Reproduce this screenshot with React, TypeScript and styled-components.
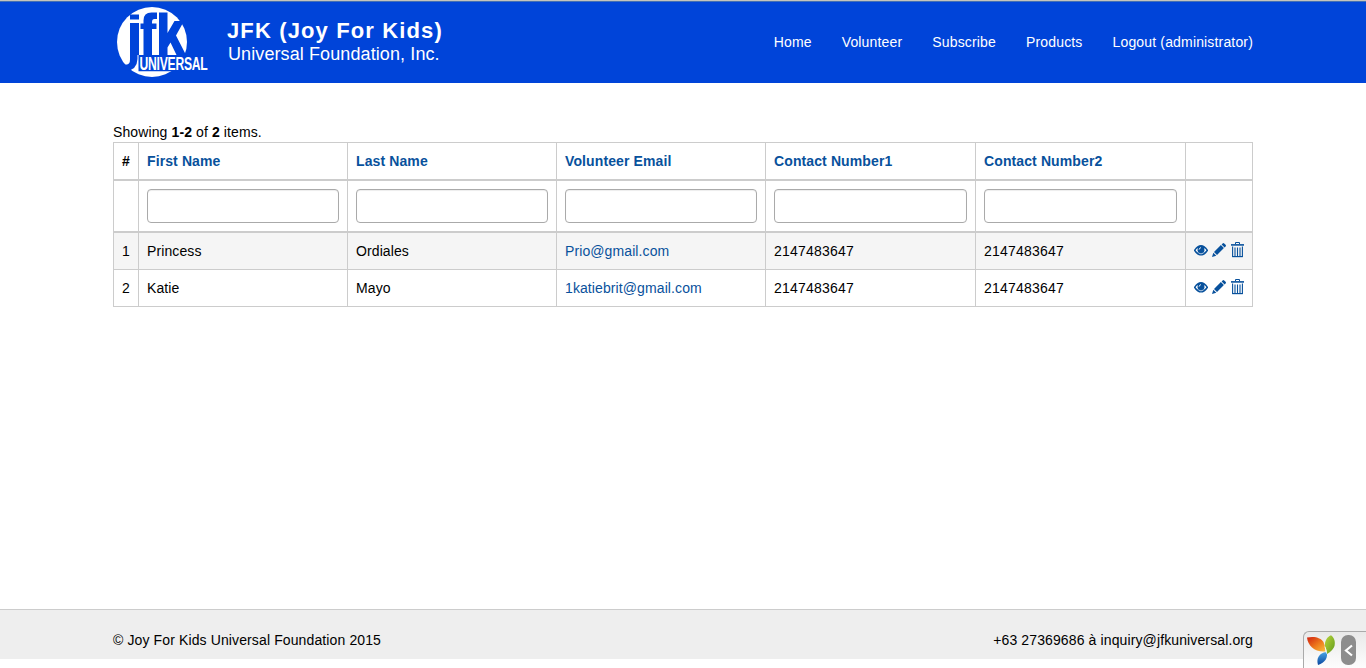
import React from "react";
import styled, { createGlobalStyle } from "styled-components";

const Global = createGlobalStyle`
  * { box-sizing: border-box; }
  body {
    margin: 0;
    background: #fff;
    color: #000;
    font: 14px/20px "Liberation Sans", Arial, sans-serif;
    letter-spacing: 0.11px;
  }
`;

const Page = styled.div`
  height: 668px;
  display: flex;
  flex-direction: column;
  overflow: hidden;
`;

const Container = styled.div`
  width: 1140px;
  margin: 0 auto;
  display: flex;
  justify-content: space-between;
`;

const Header = styled.header`
  height: 83px;
  background: #0044d9;
  border-top: 1px solid #c4c4bc;
  box-shadow: inset 0 1px 0 #4470b4;
`;

const Brand = styled.div`
  display: flex;
  padding: 5px 0 0 3px;
`;

const BrandText = styled.div`
  margin: 13px 0 0 15px;
  color: #fff;
`;

const BrandTitle = styled.div`
  font-size: 22px;
  font-weight: bold;
  line-height: 23px;
  letter-spacing: 1.13px;
  white-space: nowrap;
`;

const BrandSubtitle = styled.div`
  padding: 1px 0 0 1px;
  font-size: 18px;
  line-height: 22px;
  letter-spacing: 0.1px;
  white-space: nowrap;
`;

const Nav = styled.nav`
  display: flex;
  gap: 30px;
  padding-top: 31px;
  letter-spacing: 0.16px;
`;

const NavLink = styled.a`
  color: #fff;
`;

const Main = styled.main`
  flex: 1;
  width: 1140px;
  margin: 0 auto;
  padding-top: 39px;
`;

const Table = styled.table`
  width: 1139px;
  table-layout: fixed;
  border-collapse: collapse;
  border: 1px solid #ccc;
`;

const Col = styled.col<{ $w: number }>`
  width: ${(p) => p.$w}px;
`;

const HeadCell = styled.th`
  padding: 8px;
  height: 37px;
  text-align: left;
  white-space: nowrap;
  border: 1px solid #ccc;
  border-bottom-width: 2px;
  color: #000;
`;

const SortLink = styled.a`
  color: #08519c;
`;

const FilterCell = styled.td`
  padding: 8px;
  border: 1px solid #ccc;
  border-bottom-width: 2px;
`;

const FilterInput = styled.input`
  display: block;
  width: 100%;
  height: 34px;
  border: 1px solid #aaa;
  border-radius: 4px;
  background: #fff;
  box-shadow: inset 0 1px 1px rgba(0, 0, 0, 0.075);
`;

const Row = styled.tr<{ $striped: boolean }>`
  background: ${(p) => (p.$striped ? "#f5f5f5" : "#fff")};
`;

const Cell = styled.td<{ $numeric?: boolean }>`
  padding: 8px;
  border: 1px solid #ccc;
  white-space: nowrap;
  letter-spacing: ${(p) => (p.$numeric ? "0.21px" : "0.1px")};
`;

const MailLink = styled.a`
  color: #08519c;
`;

const Actions = styled.div`
  display: flex;
  gap: 4px;
  height: 20px;
  padding-top: 2px;

  svg {
    flex: none;
  }
`;

const Footer = styled.footer`
  height: 50px;
  margin-bottom: 9px;
  padding-top: 20px;
  background: #eee;
  border-top: 1px solid #ccc;
  letter-spacing: 0.12px;
`;

const DebugBar = styled.div`
  position: fixed;
  right: 0;
  bottom: 0;
  width: 63px;
  height: 37px;
  display: flex;
  padding: 3px 0 0 3px;
  gap: 5px;
  border: 1px solid #aaa;
  border-width: 1px 0 0 1px;
  border-radius: 6px 0 0 0;
  background: linear-gradient(#e9e9e9, #fdfdfd);
`;

const Toggle = styled.div`
  width: 15px;
  height: 30px;
  border-radius: 7px;
  background: #8d8d8d;
  display: flex;
  align-items: center;
  justify-content: center;
`;

const LogoSvg = styled.svg`
  overflow: visible;
`;

const Logo = () => (
  <LogoSvg width="96" height="72" viewBox="0 0 96 72">
    <circle cx="36" cy="36" r="35" fill="#fff" />
    <g fill="#0044d9">
      <path d="M14 8.500h9v5h-9z" />
      <path d="M14 17h9v32h-1.500v4Q21 64 10 65L4 59l7-.5q3-.5 3-5z" />
      <path d="M27.500 49V23h-3v-5.500h3v-3q0-8 8-8h5.500v6.500h-2.500q-2.500 0-2.500 3v1.500h4.500V23h-4.500v26z" />
      <path d="M43 6.500h8.500V27l7-12h9.500l-8 14.500 10 19.500h-9.500l-6-12.500-3 5V49H43z" />
      <path d="M22.500 49H96v16.200H22.500z" />
    </g>
    <text
      x="34.800"
      y="63.800"
      transform="scale(.675 1)"
      fill="#fff"
      fontFamily="Liberation Sans, sans-serif"
      fontSize="18"
      fontWeight="bold"
      letterSpacing="-0.35"
    >
      UNIVERSAL
    </text>
  </LogoSvg>
);

const Eye = () => (
  <svg width="14" height="15" viewBox="0 0 14 15">
    <path d="M-.2 7.300C2 3.600 4.500 2 7 2S12 3.600 14.200 7.300C12 11 9.500 12.600 7 12.600S2 11-.2 7.300z" fill="#08519c" />
    <path d="M1.600 7.300Q2.500 5.700 3.700 4.900Q2.800 8.200 4.800 10Q2.900 9.400 1.600 7.300z" fill="#fff" />
    <path d="M12.400 7.300Q11.500 5.700 10.300 4.900Q11.200 8.200 9.200 10Q11.100 9.400 12.400 7.300z" fill="#fff" />
    <path d="M4.500 10Q7 11.800 9.500 10" stroke="#fff" strokeWidth=".7" fill="none" />
    <path d="M5.100 6.600Q5.300 4.900 7 4.600" stroke="#fff" strokeWidth=".9" fill="none" />
  </svg>
);

const Pencil = () => (
  <svg width="14" height="14" viewBox="0 0 14 14" fill="#08519c">
    <path d="M0 14l1.300-4.300 3 3z" />
    <path d="M2 9l6.900-6.900 3 3L5 12z" />
    <path d="M9.600 1.400l1-1q.8-.7 1.600 0l1.400 1.400q.8.800 0 1.600l-1 1z" />
  </svg>
);

const TrashIcon = styled.svg`
  margin-top: -2px;
`;

const Trash = () => (
  <TrashIcon width="15" height="17" viewBox="0 0 15 17" fill="none" stroke="#08519c">
    <path d="M5.500 3V1.500h4V3" />
    <path d="M1 3.900h13" strokeWidth="1.600" />
    <path d="M2.600 5.500v10h9.800v-10M5 6.500v8.500M7.500 6.500v8.500M10 6.500v8.500" strokeWidth="1.100" />
    <path d="M2.200 15.700h10.600" />
  </TrashIcon>
);

const YiiLogo = () => (
  <svg width="29" height="31" viewBox="0 0 29 31">
    <defs>
      <linearGradient id="leafRed" x1="0" y1="0" x2="1" y2="1">
        <stop stopColor="#d02010" />
        <stop offset=".55" stopColor="#ee7b1c" />
        <stop offset="1" stopColor="#fbc040" />
      </linearGradient>
      <linearGradient id="leafGreen" x1="0" y1="0" x2="1" y2="1">
        <stop stopColor="#b9d53a" />
        <stop offset="1" stopColor="#5f9a1c" />
      </linearGradient>
      <linearGradient id="leafBlue" x1="0" y1="0" x2="0" y2="1">
        <stop stopColor="#49a5e6" />
        <stop offset="1" stopColor="#0a479f" />
      </linearGradient>
    </defs>
    <path d="M0 2.500C8 .8 14 3 16.500 7q2 4 2 9.500C8 17.500 1 11 0 2.500z" fill="url(#leafRed)" />
    <path d="M24 .3C27.500 3 28.500 7 27.500 11q-1.500 4.500-7.500 8-.3-4-2-7.500C17.500 6 20 2 24 .3z" fill="url(#leafGreen)" />
    <path d="M19.500 17c2 5-1.500 11-8.500 13C9 23.500 12 18 19.500 17z" fill="url(#leafBlue)" />
    <path d="M19.500 18.500q-.2-4-1.700-7" stroke="#fff" strokeWidth=".8" fill="none" />
  </svg>
);

const nav = ["Home", "Volunteer", "Subscribe", "Products", "Logout (administrator)"];
const widths = [25, 209, 209, 209, 210, 210, 67];
const columns = ["First Name", "Last Name", "Volunteer Email", "Contact Number1", "Contact Number2"];
const volunteers = [
  { first: "Princess", last: "Ordiales", email: "Prio@gmail.com", phone1: "2147483647", phone2: "2147483647" },
  { first: "Katie", last: "Mayo", email: "1katiebrit@gmail.com", phone1: "2147483647", phone2: "2147483647" },
];

export default function App() {
  return (
    <Page>
      <Global />
      <Header>
        <Container>
          <Brand>
            <Logo />
            <BrandText>
              <BrandTitle>JFK (Joy For Kids)</BrandTitle>
              <BrandSubtitle>Universal Foundation, Inc.</BrandSubtitle>
            </BrandText>
          </Brand>
          <Nav>
            {nav.map((label) => (
              <NavLink key={label}>{label}</NavLink>
            ))}
          </Nav>
        </Container>
      </Header>
      <Main>
        <div>
          Showing <b>1-2</b> of <b>2</b> items.
        </div>
        <Table>
          <colgroup>
            {widths.map((w, i) => (
              <Col key={i} $w={w} />
            ))}
          </colgroup>
          <thead>
            <tr>
              <HeadCell>#</HeadCell>
              {columns.map((c) => (
                <HeadCell key={c}>
                  <SortLink>{c}</SortLink>
                </HeadCell>
              ))}
              <HeadCell />
            </tr>
            <tr>
              <FilterCell />
              {columns.map((c) => (
                <FilterCell key={c}>
                  <FilterInput aria-label={c} />
                </FilterCell>
              ))}
              <FilterCell />
            </tr>
          </thead>
          <tbody>
            {volunteers.map((v, i) => (
              <Row key={v.first} $striped={i % 2 === 0}>
                <Cell>{i + 1}</Cell>
                <Cell>{v.first}</Cell>
                <Cell>{v.last}</Cell>
                <Cell>
                  <MailLink>{v.email}</MailLink>
                </Cell>
                <Cell $numeric>{v.phone1}</Cell>
                <Cell $numeric>{v.phone2}</Cell>
                <Cell>
                  <Actions>
                    <Eye />
                    <Pencil />
                    <Trash />
                  </Actions>
                </Cell>
              </Row>
            ))}
          </tbody>
        </Table>
      </Main>
      <Footer>
        <Container>
          <span>© Joy For Kids Universal Foundation 2015</span>
          <span>+63 27369686 à inquiry@jfkuniversal.org</span>
        </Container>
      </Footer>
      <DebugBar>
        <YiiLogo />
        <Toggle>
          <svg width="9" height="13" viewBox="0 0 9 13" fill="none" stroke="#fff" strokeWidth="2.200">
            <path d="M8 1.500L2 6.500l6 5" />
          </svg>
        </Toggle>
      </DebugBar>
    </Page>
  );
}
